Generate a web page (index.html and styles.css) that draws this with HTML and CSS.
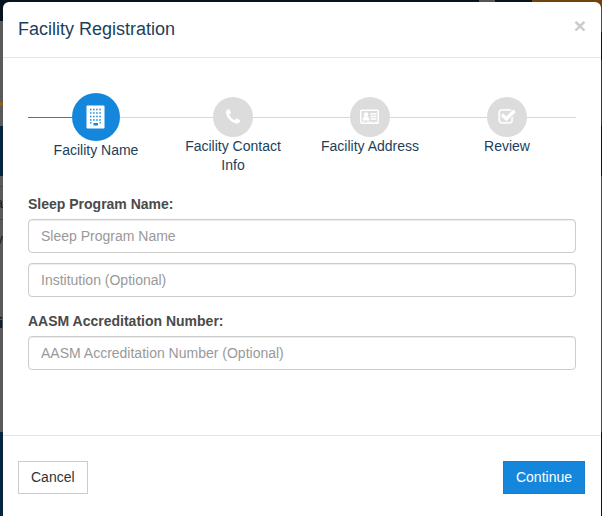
FILE: index.html
```html
<!DOCTYPE html>
<html lang="en">
<head>
<meta charset="utf-8">
<meta name="viewport" content="width=device-width, initial-scale=1">
<title>Facility Registration</title>
<link rel="stylesheet" href="styles.css">
</head>
<body>
<div class="page-edge" aria-hidden="true">
  <span>a</span>
  <span>v</span>
  <span class="edge-heading">i</span>
</div>
<div class="modal" role="dialog" aria-labelledby="modal-title">
  <header class="modal-header">
    <h1 class="modal-title" id="modal-title">Facility Registration</h1>
    <button class="close" type="button" aria-label="Close">×</button>
  </header>
  <form class="modal-form">
    <div class="modal-body">
      <ol class="steps">
        <li class="step active">
          <span class="step-icon">
            <svg width="20" height="24" viewBox="0 0 20 24">
              <rect x="0.500" y="0.500" width="18" height="23" rx="1" fill="#fff"/>
              <path d="M4 4.500h11M4 8h11M4 11.500h11M4 15h11" stroke="#1487dd" stroke-width="1.400" stroke-dasharray="1.500 1.600"/>
              <path d="M4 17.200h1.500v1.200H4zM13.500 17.200H15v1.200h-1.500zM7.500 18h4.500v2.500H7.500z" fill="#1487dd"/>
            </svg>
          </span>
          <span class="step-label">Facility Name</span>
        </li>
        <li class="step">
          <span class="step-icon">
            <svg width="18" height="18" viewBox="0 0 1792 1792"><path fill="#fff" d="M1600 1240q0 27-10 70.500t-20.500 68.500q-21 50-122 106-94 51-186 51-27 0-53-3.500t-57.500-12.500-47-14.500-55.500-20.500-49-18q-98-35-175-83-127-79-264-216t-216-264q-48-77-83-175-3-9-18-49t-20.500-55.500-14.500-47-12.500-57.500-3.500-53q0-92 51-186 56-101 106-122 25-10 68.500-20.500t70.500-10.500q14 0 21 3 18 6 53 76 11 19 30 54t35 63.500 31 53.500q3 4 17.500 25t21.500 35.500 7 28.500q0 20-28.500 50t-62 55-62 53-28.500 46q0 9 5 22.500t8.500 20.500 14 24 11.500 19q76 137 174 235t235 174q2 1 19 11.500t24 14 20.500 8.500 22.500 5q18 0 46-28.500t53-62 55-62 50-28.500q14 0 28.500 7t35.500 21.500 25 17.500q25 15 53.500 31t63.500 35 54 30q70 35 76 53 3 7 3 21z"/></svg>
          </span>
          <span class="step-label">Facility Contact Info</span>
        </li>
        <li class="step">
          <span class="step-icon">
            <svg width="20" height="16" viewBox="0 0 20 16">
              <rect x="0.750" y="1.250" width="17.500" height="13" rx="1" fill="none" stroke="#fff" stroke-width="1.500"/>
              <circle cx="6" cy="5.500" r="2.300" fill="#fff"/>
              <path d="M2.800 11.600V9.700q0-2.100 1.900-2.300h2.600q1.900.2 1.900 2.300v1.900z" fill="#fff"/>
              <path d="M10.500 5h6M10.500 7.500h6M10.500 10h6" stroke="#fff" stroke-width="1.500"/>
              <path d="M1.500 13h3M6.500 13h6M14.500 13h3" stroke="#fff"/>
            </svg>
          </span>
          <span class="step-label">Facility Address</span>
        </li>
        <li class="step">
          <span class="step-icon">
            <svg width="18" height="18" viewBox="0 0 1792 1792"><path fill="#fff" stroke="#fff" stroke-width="50" d="M1472 930v318q0 119-84.500 203.500t-203.500 84.500h-832q-119 0-203.500-84.500t-84.500-203.500v-832q0-119 84.500-203.500t203.500-84.500h832q63 0 117 25 15 7 18 23 3 17-9 29l-49 49q-10 10-23 10-3 0-9-2-23-6-45-6h-832q-66 0-113 47t-47 113v832q0 66 47 113t113 47h832q66 0 113-47t47-113v-254q0-13 9-22l64-64q10-10 23-10 6 0 12 3 20 8 20 29zm231-489l-814 814q-24 24-57 24t-57-24l-430-430q-24-24-24-57t24-57l110-110q24-24 57-24t57 24l263 263 647-647q24-24 57-24t57 24l110 110q24 24 24 57t-24 57z"/></svg>
          </span>
          <span class="step-label">Review</span>
        </li>
      </ol>
      <div class="group">
        <label class="label" for="program">Sleep Program Name:</label>
        <input class="field" id="program" type="text" placeholder="Sleep Program Name">
        <input class="field" id="institution" type="text" placeholder="Institution (Optional)" aria-label="Institution">
      </div>
      <div class="group">
        <label class="label" for="accreditation">AASM Accreditation Number:</label>
        <input class="field" id="accreditation" type="text" placeholder="AASM Accreditation Number (Optional)">
      </div>
    </div>
    <footer class="modal-footer">
      <button class="btn" type="button">Cancel</button>
      <button class="btn primary" type="submit">Continue</button>
    </footer>
  </form>
</div>
</body>
</html>
```
FILE: styles.css
```css
* {
  box-sizing: border-box;
}

/* Dimmed page behind the dialog: top bar, then the left and right edges */
body {
  margin: 0;
  padding: 2px 1px 0 3px;
  min-height: 100vh;
  font: 14px/19px "Liberation Sans", Arial, sans-serif;
  color: #4a4a4a;
  background:
    linear-gradient(90deg, #07131f 0 479px, #555 479px 495px, #07131f 495px 532px, #70430f 532px) top / 100% 6px no-repeat,
    linear-gradient(#70430f 0 32px, #07131f 32px 60px, #4a3012 60px 126px, #07131f 126px 176px, #4a4a4a 176px 432px, #07131f 432px) right / 8px 100% no-repeat,
    linear-gradient(#07131f 0 21px, #5a5a5a 21px 102px, #8a6020 102px 106px, #5a5a5a 106px 126px, #06263f 126px 176px, #5a5a5a 176px 186px, #484848 186px 187px, #5a5a5a 187px 219px, #484848 219px 220px, #5a5a5a 220px 432px, #06263f 432px);
}

/* Page text that shows past the dialog's left edge */
.page-edge {
  position: absolute;
  top: 194px;
  left: 0;
  display: flex;
  flex-direction: column;
  align-items: flex-end;
  gap: 17px;
  width: 3px;
  overflow: hidden;
  color: #1c1c1c;
}

.edge-heading {
  margin-top: 48px;
  font-weight: 700;
  color: #06182a;
}

.modal {
  position: relative;
  min-height: calc(100vh - 2px);
  background: #fff;
  border-radius: 6px 6px 0 0;
}

.modal-header {
  display: flex;
  align-items: center;
  justify-content: space-between;
  padding: 15px;
  border-bottom: 1px solid #e5e5e5;
}

.modal-title {
  margin: 0;
  font-size: 18px;
  line-height: 25px;
  font-weight: 400;
  color: #1b3f5c;
}

.close {
  align-self: flex-start;
  padding: 0;
  border: 0;
  background: none;
  font: bold 21px/18px "Liberation Sans", Arial, sans-serif;
  color: #ccc;
  cursor: pointer;
}

.modal-body {
  padding: 35px 25px 65px;
}

.steps {
  position: relative;
  display: grid;
  grid-template-columns: repeat(4, 1fr);
  margin: 0 0 20px;
  padding: 0;
  list-style: none;
}

.steps::before {
  content: "";
  position: absolute;
  top: 24px;
  left: 0;
  right: 0;
  height: 1px;
  background: linear-gradient(90deg, #2485a8 12.5%, #d8d8d8 12.5%);
}

.step {
  position: relative;
  display: flex;
  flex-direction: column;
  align-items: center;
  padding: 4px 11px 0 10px;
  text-align: center;
  color: #1b3f5c;
}

.step.active {
  padding-top: 0;
}

.step-icon {
  display: flex;
  align-items: center;
  justify-content: center;
  width: 40px;
  height: 40px;
  border-radius: 50%;
  background: #dcdcdc;
}

.active .step-icon {
  width: 48px;
  height: 48px;
  background: #1487dd;
}

.group + .group {
  margin-top: 15px;
}

.label {
  display: block;
  margin-bottom: 5px;
  font-weight: 700;
}

.field {
  display: block;
  width: 100%;
  height: 34px;
  padding: 6px 12px;
  border: 1px solid #ccc;
  border-radius: 4px;
  background: #fff;
  box-shadow: inset 0 1px 1px rgba(0, 0, 0, 0.075);
  font: inherit;
  color: #555;
}

.field + .field {
  margin-top: 10px;
}

.field::placeholder {
  color: #999;
  opacity: 1;
}

.modal-footer {
  display: flex;
  justify-content: space-between;
  padding: 25px 16px 20px 15px;
  border-top: 1px solid #e5e5e5;
}

.btn {
  padding: 6px 12px;
  border: 1px solid #ccc;
  background: #fff;
  font: inherit;
  color: #333;
  cursor: pointer;
}

.btn.primary {
  border-color: #1c7cc4;
  background: #1487dd;
  color: #fff;
}
```
